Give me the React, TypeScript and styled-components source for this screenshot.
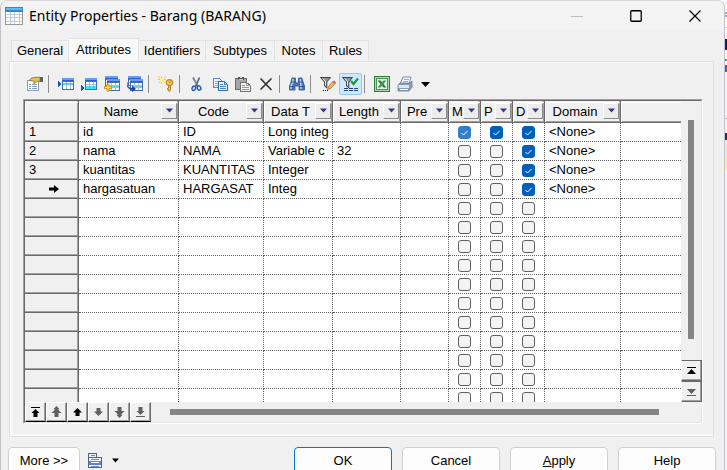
import React from 'react';
import styled, { createGlobalStyle, css } from 'styled-components';

const GlobalStyle = createGlobalStyle`
  * { box-sizing: border-box; }
  html, body { margin: 0; height: 100%; overflow: hidden; }
  body { background: #fff; color: #000; font: 13px/16px "Liberation Sans", Arial, sans-serif; }
  button { font: inherit; color: inherit; padding: 0; margin: 0; }
`;

const Desktop = styled.div`
  min-height: 100vh;
  padding-right: 2px;
  background: linear-gradient(
    #f4f6fa 12px, #8fa9dc 12px 14px, #f4f6fa 14px 15px, #8fa9dc 15px 17px, #fafafa 17px 27px,
    #c8c8c8 27px 28px, #fafafa 28px 39px, #0b1f6b 39px 50px, #fafafa 50px 59px, #2fa4b4 59px 61px,
    #fafafa 61px 65px, #5555bb 65px 72px, #f2f2f8 72px 118px, #b8b8b8 118px 119px, #f2f2f8 119px 133px,
    #23306b 133px 140px, #e8e8e8 140px 155px, #f3efb4 155px 171px, #f2f2f8 171px
  );
`;

const Dialog = styled.main`
  display: flex;
  flex-direction: column;
  min-height: 100vh;
  background: #f0f0f0;
  border: 1px solid #c4c4c8;
  border-top-color: #d8d8d8;
  border-radius: 8px 8px 0 0;
  overflow: hidden;
`;

const TitleBar = styled.header`
  display: flex;
  align-items: center;
  height: 29px;
  padding-left: 4px;
  background: #f3f3f3;
`;

const Title = styled.h1`
  flex: 1;
  margin: 0 0 0 6px;
  font: 400 14px/20px "Noto Sans", "Open Sans", sans-serif;
  white-space: nowrap;
`;

const CaptionButton = styled.button`
  display: flex;
  align-items: center;
  justify-content: center;
  width: 59px;
  height: 29px;
  border: 0;
  background: none;
`;

const Tabs = styled.div`
  display: flex;
  align-items: flex-end;
  height: 31px;
  padding-left: 10px;
`;

const Tab = styled.button<{ $w: number; $active?: boolean }>`
  width: ${p => p.$w}px;
  height: ${p => (p.$active ? 23 : 21)}px;
  white-space: nowrap;
  background: ${p => (p.$active ? '#f9f9f9' : '#f2f2f2')};
  border: 1px solid #e2e2e2;
  border-bottom: 0;
  & + & { border-left: ${p => (p.$active ? 1 : 0)}px solid #e2e2e2; }
`;

const Panel = styled.section`
  margin: 0 10px 0 8px;
  padding: 11px 10px 12px 13px;
  border: 1px solid #e0e0e0;
  box-shadow: inset 3px 0 #f9f9f9, inset 0 -2px #f9f9f9, inset 0 1px #f9f9f9;
`;

const Toolbar = styled.div`
  display: flex;
  align-items: center;
  height: 22px;
  margin-bottom: 4px;
`;

const ToolButton = styled.button<{ $active?: boolean; $narrow?: boolean }>`
  display: flex;
  align-items: center;
  justify-content: center;
  width: ${p => (p.$narrow ? 19 : 23)}px;
  height: 22px;
  border: 1px solid ${p => (p.$active ? '#90c8f6' : 'transparent')};
  border-radius: 2px;
  background: ${p => (p.$active ? '#cce8ff' : 'none')};
`;

const Separator = styled.span`
  width: 8px;
  height: 18px;
  padding-left: 2px;
  &::before { content: ''; display: block; width: 1px; height: 18px; background: #8c8c8c; }
`;

const SunkenFrame = styled.div`
  border: 1px solid;
  border-color: #a0a0a0 #fff #fff #a0a0a0;
`;

const GridFrame = styled.div`
  display: grid;
  grid-template-columns: minmax(0, 1fr) 20px;
  grid-template-rows: 301px 20px;
  border: 1px solid;
  border-color: #696969 #e3e3e3 #e3e3e3 #696969;
`;

const Viewport = styled.div`
  overflow: hidden;
  background: #fff;
`;

const Table = styled.table`
  width: 100%;
  table-layout: fixed;
  border-collapse: separate;
  border-spacing: 0;
`;

const Col = styled.col<{ $w?: number }>`
  width: ${p => (p.$w ? `${p.$w}px` : 'auto')};
`;

const steel = css`
  background: #f0f0f0;
  border: 0 solid #696969;
  border-width: 0 1px 1px 0;
  box-shadow: inset -1px -1px #a0a0a0;
`;

const HeadCell = styled.th`
  ${steel}
  height: 22px;
  padding: 0;
  font-weight: 400;
  &:last-child { border-right: 0; box-shadow: inset 0 -1px #a0a0a0; }
`;

const HeadInner = styled.div`
  display: flex;
  height: 20px;
  padding-top: 1px;
  box-shadow: inset 1px 1px #fff;
`;

const HeadLabel = styled.span<{ $tight?: boolean }>`
  flex: 1;
  min-width: 0;
  padding: 1px 0 0 ${p => (p.$tight ? 3 : 2)}px;
  overflow: hidden;
  white-space: nowrap;
  text-align: ${p => (p.$tight ? 'left' : 'center')};
`;

const FilterButton = styled.button`
  display: flex;
  flex: none;
  align-items: center;
  justify-content: center;
  width: 16px;
  height: 16px;
  margin-right: 1px;
  background: #ececec;
  border: 1px solid;
  border-color: #fff #8c8c8c #8c8c8c #fff;
`;

const RowHead = styled.th`
  ${steel}
  height: 19px;
  padding: 0 0 0 4px;
  font-weight: 400;
  line-height: 16px;
  text-align: left;
`;

const RowMarker = styled.span`
  display: flex;
  justify-content: center;
`;

const Cell = styled.td`
  height: 19px;
  padding: 0 0 0 4px;
  overflow: hidden;
  white-space: nowrap;
  line-height: 16px;
  border: 0 dotted #606060;
  border-width: 0 1px 1px 0;
  &:last-child { border-right: 0; }
`;

const CheckCell = styled(Cell)`
  padding: 1px 0 0 9px;
  line-height: 0;
`;

const tick = `url("data:image/svg+xml,%3Csvg xmlns='http://www.w3.org/2000/svg' viewBox='0 0 13 13'%3E%3Cpath d='M3.5 7l2 2 4-4' fill='none' stroke='white' stroke-width='1'/%3E%3C/svg%3E")`;

const Check = styled.input<{ $soft?: boolean }>`
  appearance: none;
  width: 13px;
  height: 13px;
  margin: 0;
  border: 1px solid #606060;
  border-radius: 3px;
  background: #f4f4f4;
  &:checked {
    border-color: ${p => (p.$soft ? '#327fc7' : '#005fb8')};
    background: ${tick} center / 13px 13px ${p => (p.$soft ? '#327fc7' : '#005fb8')};
  }
`;

const SideBar = styled.div`
  display: flex;
  flex-direction: column;
  align-items: center;
  padding-top: 19px;
`;

const VerticalThumb = styled.div`
  flex: 1;
  width: 6px;
  margin-bottom: 21px;
  background: #858585;
`;

const BottomBar = styled.div`
  grid-column: 1 / -1;
  display: flex;
  align-items: center;
  padding-right: 42px;
`;

const HorizontalThumb = styled.div`
  flex: 1;
  height: 6px;
  margin-left: 19px;
  background: #858585;
`;

const NudgeButton = styled.button`
  display: flex;
  flex: none;
  align-items: center;
  justify-content: center;
  width: 21px;
  height: 20px;
  background: #f0f0f0;
  border: 1px solid;
  border-color: #fff #696969 #000 #fff;
  box-shadow: inset -1px -1px #a0a0a0;
`;

const EdgeButton = styled(NudgeButton)`
  height: 21px;
  border-color: #696969 #696969 #696969 #fff;
`;

const Footer = styled.footer`
  display: flex;
  align-items: center;
  gap: 10px;
  padding: 10px 8px 8px 7px;
`;

const PushButton = styled.button<{ $primary?: boolean; $small?: boolean }>`
  width: ${p => (p.$small ? 72 : 98)}px;
  height: 27px;
  background: #fdfdfd;
  border: 1px solid ${p => (p.$primary ? '#0078d4' : '#d0d0d0')};
  border-radius: 4px;
`;

const MenuButton = styled.button`
  display: flex;
  align-items: center;
  gap: 8px;
  margin-right: auto;
  margin-left: -2px;
  background: none;
  border: 0;
`;

type Px = [string, number, number, number, number];
const Pixels = ({ d, size = 16, children }: { d: Px[]; size?: number; children?: React.ReactNode }) => (
  <svg width={size} height={size} viewBox="0 0 16 16" shapeRendering="crispEdges" aria-hidden="true">
    {d.map(([fill, x, y, w, h], i) => <rect key={i} fill={fill} x={x} y={y} width={w} height={h} />)}
    {children}
  </svg>
);

const sheet = (x: number, y: number, w: number, h: number): Px[] => [
  ['#4a6fae', x, y, w, h], ['#6a9cf0', x, y, w, 3], ['#2c5fd0', x, y + 2, w, 1],
  ['#fff', x + 1, y + 4, w - 2, h - 5], ['#a9bcd8', x + 1, y + 6, w - 2, 1],
  ['#a9bcd8', x + 4, y + 4, 1, h - 5], ['#a9bcd8', x + 8, y + 4, 1, h - 5],
];

const PropertiesIcon = () => (
  <Pixels d={[['#8d9cb8', 0, 4, 12, 11], ['#fff', 1, 5, 10, 9], ['#8c9cba', 2, 8, 2, 1], ['#8c9cba', 5, 8, 5, 1], ['#8c9cba', 2, 10, 2, 1], ['#8c9cba', 5, 10, 5, 1], ['#8c9cba', 2, 12, 2, 1], ['#8c9cba', 5, 12, 5, 1]]}>
    <g shapeRendering="auto">
      <path d="M2.500 4.500l2-2.500 3.500-.7h5v4h-2.500l-3 2H6.500l1.500-2z" fill="#ecc14c" stroke="#8c6a22" strokeWidth=".8" />
      <path d="M13 1h3v5h-3z" fill="#4b6b59" />
    </g>
  </Pixels>
);
const InsertIcon = () => (
  <Pixels d={[...sheet(4, 2, 12, 12), ['#42e4ee', 5, 7, 10, 2], ['#8aa4c8', 8, 7, 1, 2], ['#8aa4c8', 12, 7, 1, 2]]}>
    <path d="M0 5l4 3-4 3z" fill="#1558b5" />
  </Pixels>
);
const AppendIcon = () => (
  <Pixels d={[...sheet(4, 2, 12, 12), ['#42e4ee', 5, 10, 10, 3], ['#8aa4c8', 8, 10, 1, 3], ['#8aa4c8', 12, 10, 1, 3]]}>
    <path d="M0 9l4 3-4 3z" fill="#1558b5" />
  </Pixels>
);
const AddRowsIcon = () => (
  <Pixels d={[...sheet(1, 0, 13, 10), ...sheet(3, 3, 13, 12), ['#42e4ee', 8, 10, 3, 2], ['#42e4ee', 12, 10, 3, 2]]}>
    <path d="M3 8h2v2.500h2.500v2H5V15H3v-2.500H.5v-2H3z" fill="#ffe04a" stroke="#c8962a" strokeWidth="1" shapeRendering="auto" />
  </Pixels>
);
const ReplaceRowsIcon = () => (
  <Pixels d={[...sheet(1, 0, 13, 10), ...sheet(3, 3, 13, 12), ['#42e4ee', 8, 10, 3, 2], ['#42e4ee', 12, 10, 3, 2]]}>
    <path d="M3 4c-4 3-3 8 2 8V9l4 4-4 3v-2C-1 13-2 7 3 4z" fill="#1749b5" shapeRendering="auto" />
  </Pixels>
);
const KeyIcon = () => (
  <Pixels d={[['#f1cc28', 3, 0, 1, 8], ['#f1cc28', 0, 3, 8, 1], ['#f1cc28', 1, 1, 1, 1], ['#f1cc28', 6, 1, 1, 1], ['#f1cc28', 1, 6, 1, 1], ['#f1cc28', 6, 6, 1, 1], ['#ffec83', 2, 2, 4, 4], ['#f1cc28', 0, 0, 1, 1], ['#f1cc28', 7, 0, 1, 1]]}>
    <g shapeRendering="auto">
      <path d="M10.500 9h2v5l-1 1.500-1.500-1 .5-1-1.500-.5 1.500-1z" fill="#f2be3f" stroke="#9b6819" strokeWidth=".8" />
      <ellipse cx="11.500" cy="6.500" rx="3.500" ry="3" fill="#f5c64a" stroke="#b17a20" />
      <circle cx="12" cy="5.500" r="1" fill="#fff3c8" stroke="#875b16" strokeWidth=".6" />
    </g>
  </Pixels>
);
const CutIcon = () => (
  <svg width="16" height="16" viewBox="0 0 16 16" fill="none" aria-hidden="true">
    <path d="M4 1.500l5 9M10.500 1.500l-4 9" stroke="#53647c" strokeWidth="1.700" />
    <path d="M4.500 2l3 6" stroke="#b8c6d8" strokeWidth=".6" />
    <ellipse cx="4.800" cy="12.300" rx="1.700" ry="2.200" transform="rotate(25 4.800 12.300)" stroke="#265bbb" strokeWidth="1.500" />
    <ellipse cx="10" cy="12" rx="1.700" ry="2.200" transform="rotate(-30 10 12)" stroke="#265bbb" strokeWidth="1.500" />
  </svg>
);
const CopyIcon = () => (
  <Pixels d={[]}>
    <path d="M1.500 2.500h6l2 2v7h-8z" fill="#eef5ff" stroke="#5b87ca" />
    <path d="M3 5.500h4M3 7.500h4M3 9.500h3" stroke="#80a6dc" />
    <path d="M6.500 5.500h6l3 3v6h-9z" fill="#e7f1ff" stroke="#3467b7" />
    <path d="M12.500 5.500v3h3M8 8.500h3M8 10.500h6M8 12.500h6" fill="none" stroke="#4b80cc" />
  </Pixels>
);
const PasteIcon = () => (
  <Pixels d={[['#6c6c6c', 0, 2, 12, 12], ['#a4a4a4', 1, 3, 10, 10], ['#555', 3, 1, 6, 3], ['#ddd', 5, 0, 2, 2], ['#cfcfcf', 4, 3, 4, 1]]}>
    <path d="M5.500 6.500h6l4 3v6h-10z" fill="#f2f2f2" stroke="#707070" />
    <path d="M11.500 6.500v3h4M7 9.500h3M7 11.500h7M7 13.500h7" fill="none" stroke="#999" />
  </Pixels>
);
const DeleteIcon = () => (
  <svg width="16" height="16" viewBox="0 0 16 16" aria-hidden="true">
    <path d="M3 3l10 10.500M13 3L3 13" stroke="#333" strokeWidth="1.700" strokeLinecap="round" />
  </svg>
);
const FindIcon = () => (
  <svg width="16" height="16" viewBox="0 0 16 16" aria-hidden="true">
    <path d="M3 2h3.500v3l.5 2h2l.5-2V2H13l1 4 1.500 4v4h-5.500v-4H6v4H.5v-4L2 6z" fill="#4a74bb" stroke="#2c5292" strokeWidth=".8" />
    <path d="M4 3v3l-2 4v3M11.500 3v3l.5 4v3" fill="none" stroke="#bdd5fb" strokeWidth="1.400" />
    <path d="M2 6h5M9 6h5M1 10.500h4M11 10.500h4" stroke="#203f78" strokeWidth=".7" />
  </svg>
);
const Funnel = () => (
  <>
    <path d="M.5 1.500h10L6.800 6v6L4.500 10V6z" fill="#8d9298" stroke="#444" />
    <path d="M3 2.500l2.500 3v4" fill="none" stroke="#eee" />
  </>
);
const FilterEditIcon = () => (
  <svg width="16" height="16" viewBox="0 0 16 16" aria-hidden="true">
    <Funnel />
    <path d="M7.500 13.500l1-3 5-5.500 2 2-5 5.500z" fill="#f2bc62" stroke="#9b622c" strokeWidth=".8" />
    <path d="M12.500 6l1.500-1.500 2 2-1.500 1.500z" fill="#d8605a" />
    <path d="M3 14.500h1M5 14.500h1M7 14.500h1" stroke="#111" />
  </svg>
);
const FilterOnIcon = () => (
  <svg width="17" height="16" viewBox="0 0 17 16" aria-hidden="true">
    <Funnel />
    <path d="M9 5l2.500 3L16 2.500" fill="none" stroke="#0ba324" strokeWidth="2.200" />
    <path d="M2 12.500h4M7 12.500h4M12 12.500h4M2 14.500h4M7 14.500h4M12 14.500h4" stroke="#243e86" />
  </svg>
);
const ExcelIcon = () => (
  <Pixels d={[['#2f7b3a', 0, 0, 16, 16], ['#b4d8b2', 1, 1, 14, 14], ['#4b9152', 2, 2, 12, 12], ['#edf7ec', 3, 3, 10, 10]]}>
    <g shapeRendering="auto">
      <path d="M3.500 4.500h3l6 7h-3z" fill="#237b32" />
      <path d="M9.500 4.500h3l-6 7h-3z" fill="#3f9a49" />
    </g>
  </Pixels>
);
const PrintIcon = () => (
  <svg width="16" height="16" viewBox="0 0 16 16" aria-hidden="true">
    <path d="M6 1h8l-2 7H3z" fill="#f4f9ff" stroke="#7b8eac" />
    <path d="M7 3.500h5M6 5.500h5" stroke="#8cb0df" />
    <path d="M3 7h10l2-2v6l-3 4H1V9z" fill="#8b9cb4" stroke="#66779a" strokeWidth=".8" />
    <path d="M1.500 9h10.500v3H1.500z" fill="#dce5f0" />
    <path d="M3 13.500h8" stroke="#fff" />
  </svg>
);
const CaretIcon = ({ color = '#000', w = 9 }: { color?: string; w?: number }) => (
  <svg width={w} height="5" viewBox="0 0 9 5" aria-hidden="true"><path d="M0 0h9L4.500 5z" fill={color} /></svg>
);
const EntityIcon = () => (
  <Pixels size={18} d={[['#9a9a8c', 0, 0, 16, 16], ['#3d82c4', 0, 0, 16, 4], ['#55c3ee', 1, 1, 14, 2], ['#b9cce4', 1, 4, 14, 11],
    ...[1, 5, 9, 13].flatMap(x => [4, 7, 10, 13].map((y): Px => ['#fff', x, y, x === 13 ? 2 : 3, 2]))]} />
);
const ViewsIcon = () => (
  <Pixels size={16} d={[['#53647d', 0, 0, 9, 5], ['#e8edf5', 1, 1, 7, 4], ['#53647d', 0, 4, 14, 11], ['#f1f5fa', 1, 5, 12, 9], ['#7f8ba0', 3, 2, 4, 1], ['#7f8ba0', 3, 6, 8, 1], ['#5b80f0', 1, 8, 12, 4], ['#fff', 3, 9, 8, 1], ['#7f8ba0', 3, 13, 8, 1]]} />
);

const nudges: Record<string, [string, string]> = {
  'Move to top': ['M1 1h9v1H1zM5.500 3l4 4h-2v4h-4V7h-2z', '#000'],
  'Page up': ['M5.500 0l3 3h-1v1l3 3h-3v4h-4V7h-3l3-3V3h-1z', '#606060'],
  'Move up': ['M5.500 2l4.500 4.500H7.500V10h-4V6.500H1z', '#000'],
  'Move down': ['M5.500 10l4.500-4.500H7.500V2h-4v3.500H1z', '#606060'],
  'Page down': ['M5.500 12l3-3h-1V8l3-3h-3V1h-4v4h-3l3 3v1h-1z', '#606060'],
  'Move to bottom': ['M1 10h9v1H1zM5.500 9l4-4h-2V1h-4v4h-2z', '#606060'],
};

const tabs: [string, number][] = [
  ['General', 58], ['Attributes', 70], ['Identifiers', 67], ['Subtypes', 69], ['Notes', 48], ['Rules', 46],
];

const columns = [
  { label: 'Name', w: 100 }, { label: 'Code', w: 85 }, { label: 'Data T', w: 69 }, { label: 'Length', w: 68 },
  { label: 'Pre', w: 48 }, { label: 'M', w: 32, tight: true }, { label: 'P', w: 32, tight: true },
  { label: 'D', w: 32, tight: true }, { label: 'Domain', w: 76 },
];

const attributes = [
  { name: 'id', code: 'ID', type: 'Long integ', length: '', flags: [true, true, true] },
  { name: 'nama', code: 'NAMA', type: 'Variable c', length: '32', flags: [false, false, true] },
  { name: 'kuantitas', code: 'KUANTITAS', type: 'Integer', length: '', flags: [false, false, true] },
  { name: 'hargasatuan', code: 'HARGASAT', type: 'Integ', length: '', flags: [false, false, true], current: true },
];
const emptyRows = Array.from({ length: 11 }, () => ({ name: '', code: '', type: '', length: '', flags: [false, false, false], current: false }));
const rows = [...attributes, ...emptyRows];
const flagNames = ['Mandatory', 'Primary identifier', 'Displayed'];

const toolGroups: [string, React.ComponentType][][] = [
  [['Properties', PropertiesIcon]],
  [['Insert a Row', InsertIcon], ['Add a Row', AppendIcon], ['Add Attributes', AddRowsIcon], ['Reuse Attributes', ReplaceRowsIcon]],
  [['Create Identifier', KeyIcon]],
  [['Cut', CutIcon], ['Copy', CopyIcon], ['Paste', PasteIcon], ['Delete', DeleteIcon]],
  [['Find', FindIcon]],
  [['Customize Columns and Filter', FilterEditIcon], ['Enable Filter', FilterOnIcon]],
  [['Export to Excel', ExcelIcon], ['Print', PrintIcon]],
];

export default function App() {
  return (
    <Desktop>
      <GlobalStyle />
      <Dialog>
        <TitleBar>
          <EntityIcon />
          <Title>Entity Properties - Barang (BARANG)</Title>
          <CaptionButton aria-label="Minimize" disabled>
            <svg width="12" height="12"><path d="M0 6.500h12" stroke="#bbb" /></svg>
          </CaptionButton>
          <CaptionButton aria-label="Maximize">
            <svg width="12" height="12"><rect x=".75" y=".75" width="10.500" height="10.500" rx="1" fill="none" stroke="#000" strokeWidth="1.300" /></svg>
          </CaptionButton>
          <CaptionButton aria-label="Close">
            <svg width="12" height="12"><path d="M.5.5l11 11M11.500.5l-11 11" stroke="#000" strokeWidth="1.200" /></svg>
          </CaptionButton>
        </TitleBar>

        <Tabs role="tablist">
          {tabs.map(([label, w]) => (
            <Tab key={label} role="tab" aria-selected={label === 'Attributes'} $w={w} $active={label === 'Attributes'}>{label}</Tab>
          ))}
        </Tabs>

        <Panel>
          <Toolbar role="toolbar">
            {toolGroups.map((group, g) => (
              <React.Fragment key={g}>
                {g > 0 && <Separator />}
                {group.map(([label, Icon]) => (
                  <ToolButton key={label} aria-label={label} $active={label === 'Enable Filter'}><Icon /></ToolButton>
                ))}
              </React.Fragment>
            ))}
            <ToolButton $narrow aria-label="Print options"><CaretIcon /></ToolButton>
          </Toolbar>

          <SunkenFrame>
            <GridFrame>
              <Viewport>
                <Table>
                  <colgroup>
                    <Col $w={54} />
                    {columns.map(c => <Col key={c.label} $w={c.w} />)}
                    <Col />
                  </colgroup>
                  <thead>
                    <tr>
                      <HeadCell><HeadInner /></HeadCell>
                      {columns.map(c => (
                        <HeadCell key={c.label} scope="col">
                          <HeadInner>
                            <HeadLabel $tight={c.tight}>{c.label}</HeadLabel>
                            <FilterButton aria-label={`Filter ${c.label}`}><CaretIcon color="#34348c" w={7} /></FilterButton>
                          </HeadInner>
                        </HeadCell>
                      ))}
                      <HeadCell><HeadInner /></HeadCell>
                    </tr>
                  </thead>
                  <tbody>
                    {rows.map((r, i) => (
                      <tr key={i}>
                        <RowHead scope="row">
                          {i < 3 && i + 1}
                          {r.current && (
                            <RowMarker>
                              <svg width="10" height="8" viewBox="0 0 10 8" role="img" aria-label="Current row"><path d="M0 2.500h5V0l5 4-5 4V5.500H0z" /></svg>
                            </RowMarker>
                          )}
                        </RowHead>
                        <Cell>{r.name}</Cell>
                        <Cell>{r.code}</Cell>
                        <Cell>{r.type}</Cell>
                        <Cell>{r.length}</Cell>
                        <Cell />
                        {r.flags.map((on, f) => (
                          <CheckCell key={f}>
                            <Check type="checkbox" defaultChecked={on} $soft={f === 0} aria-label={`${flagNames[f]}, row ${i + 1}`} />
                          </CheckCell>
                        ))}
                        <Cell>{r.name && '<None>'}</Cell>
                        <Cell />
                      </tr>
                    ))}
                  </tbody>
                </Table>
              </Viewport>
              <SideBar>
                <VerticalThumb />
                <EdgeButton aria-label="Scroll to first row">
                  <svg width="9" height="8"><path d="M0 0h9v1H0zM4.500 2L9 7H0z" /></svg>
                </EdgeButton>
                <EdgeButton aria-label="Scroll to last row">
                  <svg width="9" height="8"><path d="M0 7h9v1H0zM4.500 6L9 1H0z" fill="#606060" /></svg>
                </EdgeButton>
              </SideBar>
              <BottomBar>
                {Object.entries(nudges).map(([label, [d, fill]]) => (
                  <NudgeButton key={label} aria-label={label}>
                    <svg width="11" height="12" viewBox="0 0 11 12"><path d={d} fill={fill} /></svg>
                  </NudgeButton>
                ))}
                <HorizontalThumb />
              </BottomBar>
            </GridFrame>
          </SunkenFrame>
        </Panel>

        <Footer>
          <PushButton $small>More &gt;&gt;</PushButton>
          <MenuButton aria-label="Views">
            <ViewsIcon />
            <CaretIcon w={7} />
          </MenuButton>
          <PushButton $primary>OK</PushButton>
          <PushButton>Cancel</PushButton>
          <PushButton><u>A</u>pply</PushButton>
          <PushButton>Help</PushButton>
        </Footer>
      </Dialog>
    </Desktop>
  );
}
